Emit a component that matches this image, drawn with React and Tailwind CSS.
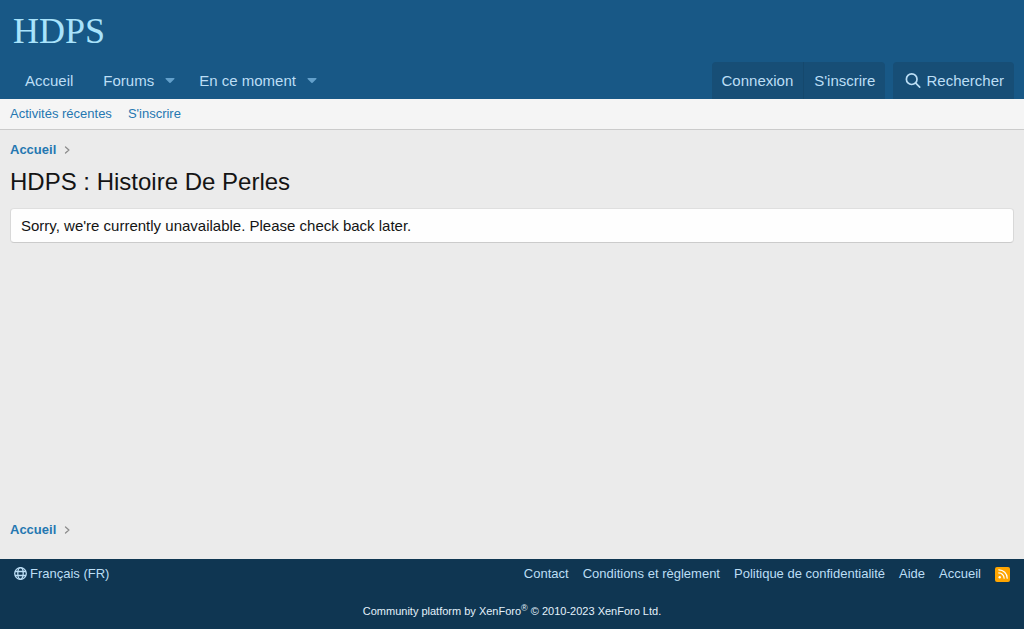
import React from 'react';

function Caret() {
  return (
    <svg className="h-[5px] w-2.5" viewBox="0 0 10 5" fill="currentColor" aria-hidden="true">
      <path d="M1 0h8c.5 0 .7.5.4.9L5.6 4.7a.9.9 0 0 1-1.2 0L.6.9C.3.5.5 0 1 0z" />
    </svg>
  );
}

function SearchIcon() {
  return (
    <svg className="size-4" viewBox="0 0 16 16" fill="none" stroke="currentColor" strokeWidth="1.7" strokeLinecap="round" aria-hidden="true">
      <circle cx="6.7" cy="6.2" r="5.3" />
      <path d="M10.7 10.2l4 4" />
    </svg>
  );
}

function GlobeIcon() {
  return (
    <svg className="mb-0.5 size-[13px]" viewBox="0 0 13 13" fill="none" stroke="currentColor" strokeWidth="1.3" aria-hidden="true">
      <circle cx="6.5" cy="6.5" r="5.8" />
      <ellipse cx="6.5" cy="6.5" rx="2.7" ry="5.8" />
      <path d="M1 4.5h11M1 8.5h11" />
    </svg>
  );
}

function RssIcon() {
  return (
    <svg className="size-2.5" viewBox="0 0 10 10" fill="none" stroke="currentColor" strokeWidth="1.2" strokeLinecap="round" aria-hidden="true">
      <circle cx="1.7" cy="8.3" r="1.2" fill="currentColor" stroke="none" />
      <path d="M.8 3.9a5.3 5.3 0 0 1 5.3 5.3M.8.8a8.4 8.4 0 0 1 8.4 8.4" />
    </svg>
  );
}

function NavItem({ label, menu }) {
  return (
    <div className="flex h-[37px] items-center">
      <a href="#" className="px-[15px]">{label}</a>
      {menu && (
        <button type="button" aria-label={'Ouvrir le menu ' + label} className="-ml-1 mr-[9px] flex h-full items-center text-[#63a0cb]">
          <Caret />
        </button>
      )}
    </div>
  );
}

function Breadcrumb() {
  return (
    <nav aria-label="Fil d'Ariane" className="flex items-center gap-2 text-[13px] leading-[18px] font-bold text-[#2577b1]">
      <a href="#">Accueil</a>
      <svg className="mb-px h-2 w-[6px] text-[#8c8c8c]" viewBox="0 0 6 8" fill="none" stroke="currentColor" strokeWidth="1.3" strokeLinecap="round" strokeLinejoin="round" aria-hidden="true">
        <path d="M1.5 1L4.9 4 1.5 7" />
      </svg>
    </nav>
  );
}

const footerLinks = ['Contact', 'Conditions et règlement', 'Politique de confidentialité', 'Aide', 'Accueil'];

export default function App() {
  return (
    <div className="flex min-h-screen flex-col bg-[#ebebeb] font-['Liberation_Sans',Arial,sans-serif] text-[15px] leading-[21px] text-[#141414]">
      <header className="bg-[#185886] text-[#bcdef5]">
        <div className="flex h-[62px] items-center px-[13px]">
          <a href="#" className="font-['Liberation_Serif',serif] text-[36px] leading-10 text-[#a9e3fb]">HDPS</a>
        </div>
        <div className="flex flex-wrap items-end justify-between px-2.5">
          <nav className="flex flex-wrap">
            <NavItem label="Accueil" />
            <NavItem label="Forums" menu />
            <NavItem label="En ce moment" menu />
          </nav>
          <div className="flex gap-2">
            <div className="flex rounded-t-sm bg-[#174e76]">
              <a href="#" className="border-r border-[#15486d] px-2.5 py-2">Connexion</a>
              <a href="#" className="px-2.5 py-2">S'inscrire</a>
            </div>
            <a href="#" className="flex items-center gap-[5px] rounded-t-sm bg-[#174e76] px-2.5 py-2 pl-3">
              <SearchIcon />
              Rechercher
            </a>
          </div>
        </div>
      </header>

      <nav className="flex gap-4 border-b border-[#cbcbcb] bg-[#f5f5f5] px-2.5 py-1.5 text-[13px] leading-[18px] text-[#2577b1]">
        <a href="#">Activités récentes</a>
        <a href="#">S'inscrire</a>
      </nav>

      <main className="flex grow flex-col px-2.5 pt-[11px] pb-5">
        <Breadcrumb />
        <h1 className="mt-1.5 text-[24px] leading-[34px]">HDPS : Histoire De Perles</h1>
        <div className="mt-[9px] mb-auto rounded border border-t-[#dfdfdf] border-x-[#d8d8d8] border-b-[#cbcbcb] bg-[#fefefe] px-2.5 py-1.5">
          Sorry, we're currently unavailable. Please check back later.
        </div>
        <Breadcrumb />
      </main>

      <footer className="bg-[#0f3652] px-2.5 pt-1.5 pb-2.5 text-[13px] leading-[18px] text-[#bcdef5]">
        <div className="flex flex-wrap justify-between px-1">
          <a href="#" className="flex items-center gap-[3px]">
            <GlobeIcon />
            Français (FR)
          </a>
          <div className="flex flex-wrap items-center gap-[14px]">
            {footerLinks.map((label) => (
              <a key={label} href="#">{label}</a>
            ))}
            <a href="#" aria-label="RSS" className="flex size-[15px] items-center justify-center rounded-xs bg-[#ffa500] text-white">
              <RssIcon />
            </a>
          </div>
        </div>
        <p className="mt-5 text-center text-[11px] leading-4 text-[#e3f1fb]">
          Community platform by XenForo<sup className="text-[9px]">®</sup> © 2010-2023 XenForo Ltd.
        </p>
      </footer>
    </div>
  );
}
